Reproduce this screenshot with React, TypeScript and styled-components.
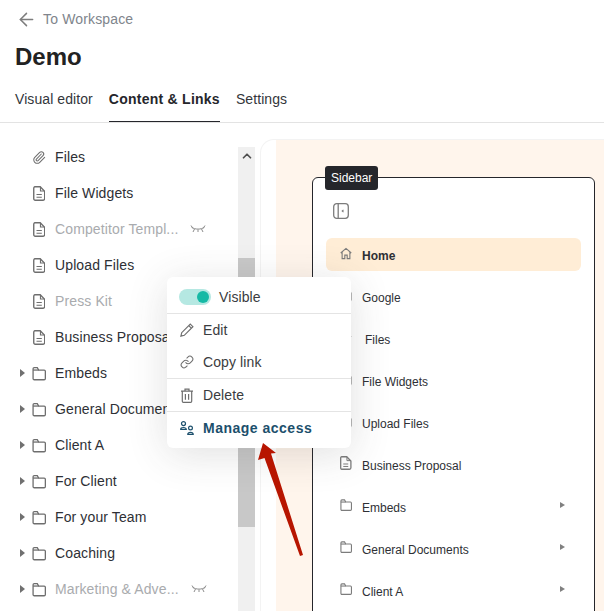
import React from 'react';
import styled, { createGlobalStyle } from 'styled-components';
import { ArrowLeft, ChevronUp, Paperclip, Link as LinkIcon } from 'lucide-react';

const GlobalStyle = createGlobalStyle`
  html, body {
    margin: 0;
    padding: 0;
    background: #fff;
    overflow: hidden;
  }
  body {
    font-family: "Liberation Sans", Arial, sans-serif;
    color: #25262b;
  }
`;

const Page = styled.div`
  position: relative;
  width: 604px;
  height: 611px;
  overflow: hidden;
  display: flex;
  flex-direction: column;
`;

const Header = styled.header`
  height: 122px;
  flex: none;
  padding: 0 15px;
  border-bottom: 1px solid #e3e3e3;
  display: flex;
  flex-direction: column;
`;

const BackLink = styled.div`
  height: 38px;
  display: flex;
  align-items: center;
  gap: 6px;
  padding-left: 1px;
  font-size: 14px;
  letter-spacing: 0.15px;
  color: #80858c;
  svg {
    color: #7d7d7d;
  }
`;

const Title = styled.h1`
  margin: 0;
  height: 38px;
  line-height: 38px;
  font-size: 24px;
  font-weight: 700;
  color: #222;
`;

const Tabs = styled.nav`
  display: flex;
  gap: 16px;
  margin-top: 3px;
`;

const Tab = styled.div<{ $active?: boolean }>`
  height: 43px;
  box-sizing: border-box;
  padding-top: 12px;
  font-size: 14px;
  line-height: 17px;
  font-weight: ${p => (p.$active ? 700 : 400)};
  letter-spacing: ${p => (p.$active ? '0.25px' : '0.08px')};
  color: ${p => (p.$active ? '#25262b' : '#33363b')};
  border-bottom: 1px solid ${p => (p.$active ? '#25262b' : 'transparent')};
`;

const Body = styled.div`
  flex: 1;
  min-height: 0;
  display: flex;
`;

const TreePanel = styled.div`
  width: 238px;
  flex: none;
  padding-top: 16px;
`;

const TreeRow = styled.div<{ $muted?: boolean }>`
  height: 36px;
  display: flex;
  align-items: center;
  padding-left: 20px;
  font-size: 14px;
  letter-spacing: 0.12px;
  color: ${p => (p.$muted ? '#a9abae' : '#2e3035')};
  white-space: nowrap;
`;

const Caret = styled.span<{ $hidden?: boolean }>`
  width: 0;
  height: 0;
  flex: none;
  margin-right: 7px;
  border-style: solid;
  border-width: 4px 0 4px 5px;
  border-color: transparent transparent transparent ${p => (p.$hidden ? 'transparent' : '#707070')};
`;

const TreeIcon = styled.span`
  width: 14px;
  height: 16px;
  flex: none;
  margin-right: 9px;
  display: flex;
  align-items: center;
  justify-content: center;
  color: #6e6e6e;
`;

const RowLabel = styled.span`
  flex: none;
`;

const Lash = styled.svg`
  flex: none;
  margin-left: 12px;
  color: #8c8c8c;
`;

const Scrollbar = styled.div`
  width: 17px;
  flex: none;
  margin-top: 24px;
  background: #f0f0f0;
  display: flex;
  flex-direction: column;
  align-items: center;
`;

const ScrollUp = styled.div`
  height: 17px;
  display: flex;
  align-items: center;
  color: #505050;
`;

const ScrollThumb = styled.div`
  width: 100%;
  height: 269px;
  margin-top: 94px;
  background: #c8c8c8;
`;

const Preview = styled.div`
  flex: 1;
  min-width: 0;
  margin: 16px 0 0 5px;
  border-top: 1px solid #f3f3f3;
  border-left: 1px solid #f3f3f3;
  border-top-left-radius: 14px;
  padding-left: 15px;
  overflow: hidden;
`;

const Canvas = styled.div`
  height: 100%;
  background: #fff5ec;
  padding: 37px 0 0 36px;
`;

const SidebarFrame = styled.div`
  position: relative;
  width: 283px;
  height: 560px;
  box-sizing: border-box;
  border: 1px solid #25262b;
  border-radius: 6px;
  background: #fff;
  padding: 12px 13px 0 13px;
`;

const FrameBadge = styled.div`
  position: absolute;
  left: 12px;
  top: -12px;
  height: 24px;
  padding: 0 6px;
  border-radius: 3px;
  background: #25262b;
  color: #fff;
  font-size: 12px;
  line-height: 24px;
`;

const Collapse = styled.div`
  height: 36px;
  box-sizing: border-box;
  padding: 13px 7px 0;
  display: flex;
  align-items: flex-start;
  color: #7c7c7c;
`;

const NavList = styled.div`
  margin-top: 12px;
  display: flex;
  flex-direction: column;
`;

const NavRow = styled.div<{ $active?: boolean }>`
  height: 33px;
  margin-bottom: 9px;
  padding: 0 14px;
  display: flex;
  align-items: center;
  border-radius: 6px;
  background: ${p => (p.$active ? '#ffedd6' : 'transparent')};
  font-size: 12px;
  font-weight: ${p => (p.$active ? 700 : 400)};
  color: #2e3035;
`;

const NavIcon = styled.span`
  width: 12px;
  height: 14px;
  margin-right: 10px;
  margin-top: -3px;
  flex: none;
  display: flex;
  align-items: center;
  justify-content: center;
  color: #7c7c7c;
`;

const NavLabel = styled.span<{ $indent?: boolean }>`
  flex: 1;
  padding-top: 2px;
  padding-left: ${p => (p.$indent ? 3 : 0)}px;
`;

const NavCaret = styled.span`
  width: 0;
  height: 0;
  margin-top: -4px;
  margin-right: 2px;
  border-style: solid;
  border-width: 3.5px 0 3.5px 5px;
  border-color: transparent transparent transparent #808080;
`;

const Menu = styled.div`
  position: absolute;
  left: 167px;
  top: 277px;
  width: 184px;
  background: #fff;
  border-radius: 6px;
  box-shadow: 0 6px 40px rgba(60, 60, 60, 0.16);
`;

const MenuSection = styled.div`
  border-bottom: 1px solid #e4e4e4;
  &:last-child {
    border-bottom: 0;
  }
`;

const MenuRow = styled.div<{ $accent?: boolean }>`
  height: 32px;
  box-sizing: border-box;
  padding-left: 13px;
  display: flex;
  align-items: center;
  gap: 9px;
  font-size: 14px;
  font-weight: ${p => (p.$accent ? 700 : 400)};
  letter-spacing: ${p => (p.$accent ? '0.5px' : '0.1px')};
  color: ${p => (p.$accent ? '#1c4f6c' : '#3a3c40')};
  svg {
    flex: none;
    color: ${p => (p.$accent ? '#1c4f6c' : '#6e6e6e')};
  }
`;

const VisibleRow = styled(MenuRow)`
  height: 36px;
  padding-top: 4px;
`;

const ManageRow = styled(MenuRow)`
  height: 36px;
  padding-bottom: 4px;
`;

const ToggleTrack = styled.span`
  position: relative;
  width: 32px;
  height: 16px;
  margin-left: -1px;
  margin-right: -1px;
  border-radius: 8px;
  background: #b5e8e2;
  flex: none;
`;

const ToggleKnob = styled.span`
  position: absolute;
  right: 2px;
  top: 2px;
  width: 12px;
  height: 12px;
  border-radius: 50%;
  background: #16b9a5;
`;

const ArrowOverlay = styled.svg`
  position: absolute;
  left: 250px;
  top: 435px;
`;

const ClosedEye = () => (
  <Lash width="16" height="8" viewBox="0 0 16 8" fill="none" stroke="currentColor" strokeWidth="1">
    <path d="M1.500 2c3 2.800 10 2.800 13 0" />
    <path d="M1 .5l2 3M15 .5l-2 3M3 7l1.500-3M13 7l-1.500-3M8 7V4.500" />
  </Lash>
);

const DocIcon = ({ size = 14 }: { size?: number }) => (
  <svg width={size * 0.85} height={size} viewBox="0 0 12 14" fill="none" stroke="currentColor" strokeWidth="1.300">
    <path d="M1.800.7h5L11 5v6.800c0 .8-.6 1.500-1.400 1.500H1.800C1 13.300.7 12.600.7 11.800V2.200C.7 1.400 1 .7 1.800.7z" />
    <path d="M7 .9v3.700h3.800M3.300 8h5M3.300 10.500h5" strokeWidth="1" />
  </svg>
);

const FolderIcon = ({ size = 13 }: { size?: number }) => (
  <svg width={size} height={size} viewBox="0 0 13 13" fill="none" stroke="currentColor" strokeWidth="1.200">
    <path d="M1 2.200c0-.7.4-1.200 1.100-1.200h2.800l1.300 2.300h5.100c.6 0 1.100.5 1.100 1.200v6.600c0 .7-.5 1.200-1.100 1.200H2.100c-.7 0-1.100-.5-1.100-1.200z" />
    <path d="M1 3.300h5.200" />
  </svg>
);

const HomeIcon = () => (
  <svg width="13" height="13" viewBox="0 0 13 13" fill="none" stroke="currentColor" strokeWidth="1.200">
    <path d="M.8 6L6.500 1l5.700 5M2.300 5v7h2.900V8.300h2.600V12h2.900V5" />
  </svg>
);

const PanelIcon = () => (
  <svg width="16" height="16" viewBox="0 0 16 16" fill="none" stroke="currentColor" strokeWidth="1.300">
    <rect x=".7" y=".7" width="14.600" height="14.600" rx="3" />
    <path d="M5.200.8v14.400" />
    <path d="M10.500 6.800L9.200 8l1.300 1.200" strokeWidth="1.100" />
  </svg>
);

const PencilIcon = () => (
  <svg width="14" height="14" viewBox="0 0 14 14" fill="none" stroke="currentColor" strokeWidth="1.200">
    <path d="M10.300 1.100l2.600 2.600-8.600 8.600-3.400.8.800-3.400zM8.800 2.700l2.500 2.500" />
  </svg>
);

const TrashIcon = () => (
  <svg width="14" height="15" viewBox="0 0 14 15" fill="none" stroke="currentColor" strokeWidth="1.200">
    <path d="M1 3.200h12M5 3V1.200h4V3M2.300 3.300v9.900c0 .7.500 1.100 1.100 1.100h7.200c.6 0 1.100-.4 1.100-1.100V3.300M5.400 6v5.800M8.600 6v5.800" />
  </svg>
);

const ManageIcon = () => (
  <svg width="14" height="14" viewBox="0 0 14 14" fill="none" stroke="currentColor" strokeWidth="1.200">
    <circle cx="3.500" cy="2.600" r="2" />
    <path d="M.7 8.500c0-1.200 1-1.800 2.800-1.800s2.800.6 2.800 1.800z" />
    <circle cx="10.500" cy="7" r="1.900" />
    <path d="M7.800 13.300c0-1.400 1-2 2.700-2s2.700.6 2.700 2z" />
  </svg>
);

type Kind = 'clip' | 'file' | 'folder' | 'home';
type TreeItem = { label: string; kind: Kind; muted?: boolean; hiddenEye?: boolean };

const treeItems: TreeItem[] = [
  { label: 'Files', kind: 'clip' },
  { label: 'File Widgets', kind: 'file' },
  { label: 'Competitor Templ...', kind: 'file', muted: true, hiddenEye: true },
  { label: 'Upload Files', kind: 'file' },
  { label: 'Press Kit', kind: 'file', muted: true },
  { label: 'Business Proposal', kind: 'file' },
  { label: 'Embeds', kind: 'folder' },
  { label: 'General Documents', kind: 'folder' },
  { label: 'Client A', kind: 'folder' },
  { label: 'For Client', kind: 'folder' },
  { label: 'For your Team', kind: 'folder' },
  { label: 'Coaching', kind: 'folder' },
  { label: 'Marketing & Adve...', kind: 'folder', muted: true, hiddenEye: true },
];

const navItems: { label: string; kind: Kind; active?: boolean }[] = [
  { label: 'Home', kind: 'home', active: true },
  { label: 'Google', kind: 'file' },
  { label: 'Files', kind: 'clip' },
  { label: 'File Widgets', kind: 'file' },
  { label: 'Upload Files', kind: 'file' },
  { label: 'Business Proposal', kind: 'file' },
  { label: 'Embeds', kind: 'folder' },
  { label: 'General Documents', kind: 'folder' },
  { label: 'Client A', kind: 'folder' },
];

const kindIcon = (kind: Kind, size: number) => {
  if (kind === 'clip') return <Paperclip size={size} strokeWidth={1.8} />;
  if (kind === 'folder') return <FolderIcon size={size} />;
  if (kind === 'home') return <HomeIcon />;
  return <DocIcon size={size} />;
};

const App: React.FC = () => {
  return (
    <Page>
      <GlobalStyle />
      <Header>
        <BackLink>
          <ArrowLeft size={21} strokeWidth={1.7} />
          To Workspace
        </BackLink>
        <Title>Demo</Title>
        <Tabs>
          <Tab>Visual editor</Tab>
          <Tab $active>Content &amp; Links</Tab>
          <Tab>Settings</Tab>
        </Tabs>
      </Header>

      <Body>
        <TreePanel>
          {treeItems.map(item => (
            <TreeRow key={item.label} $muted={item.muted}>
              <Caret $hidden={item.kind !== 'folder'} />
              <TreeIcon>{kindIcon(item.kind, 15)}</TreeIcon>
              <RowLabel>{item.label}</RowLabel>
              {item.hiddenEye && <ClosedEye />}
            </TreeRow>
          ))}
        </TreePanel>

        <Scrollbar>
          <ScrollUp>
            <ChevronUp size={14} strokeWidth={3} />
          </ScrollUp>
          <ScrollThumb />
        </Scrollbar>

        <Preview>
          <Canvas>
            <SidebarFrame>
              <FrameBadge>Sidebar</FrameBadge>
              <Collapse>
                <PanelIcon />
              </Collapse>
              <NavList>
                {navItems.map(item => (
                  <NavRow key={item.label} $active={item.active}>
                    <NavIcon>{kindIcon(item.kind, 14)}</NavIcon>
                    <NavLabel $indent={item.kind === 'clip'}>{item.label}</NavLabel>
                    {item.kind === 'folder' && <NavCaret />}
                  </NavRow>
                ))}
              </NavList>
            </SidebarFrame>
          </Canvas>
        </Preview>
      </Body>

      <Menu>
        <MenuSection>
          <VisibleRow>
            <ToggleTrack>
              <ToggleKnob />
            </ToggleTrack>
            Visible
          </VisibleRow>
        </MenuSection>
        <MenuSection>
          <MenuRow>
            <PencilIcon />
            Edit
          </MenuRow>
          <MenuRow>
            <LinkIcon size={14} strokeWidth={1.8} />
            Copy link
          </MenuRow>
        </MenuSection>
        <MenuSection>
          <MenuRow>
            <TrashIcon />
            Delete
          </MenuRow>
        </MenuSection>
        <MenuSection>
          <ManageRow $accent>
            <ManageIcon />
            Manage access
          </ManageRow>
        </MenuSection>
      </Menu>

      <ArrowOverlay width="56" height="125" viewBox="0 0 56 125">
        <path d="M13 8L26 18l-5 .5L53 120l-3 1L14.500 23 8 25z" fill="#b71500" />
      </ArrowOverlay>
    </Page>
  );
};

export default App;
